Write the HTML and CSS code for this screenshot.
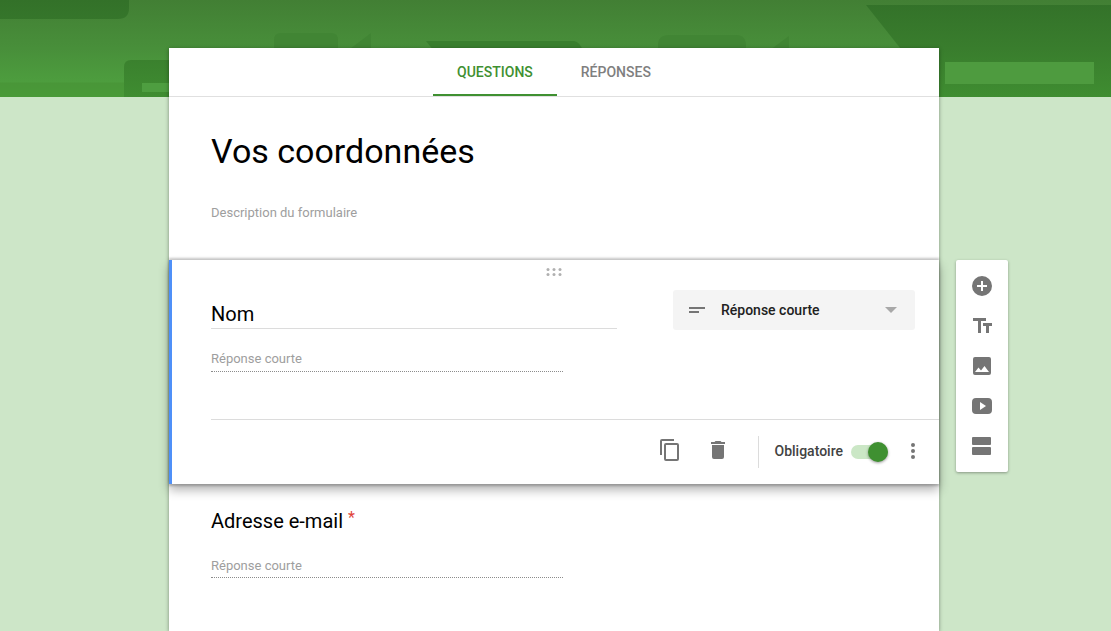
FILE: index.html
```html
<!DOCTYPE html>
<html lang="fr">
<head>
<meta charset="utf-8">
<meta name="viewport" content="width=device-width, initial-scale=1">
<title>Vos coordonnées</title>
<link rel="stylesheet" href="styles.css">
</head>
<body>
<svg class="banner" viewBox="0 0 1111 97" preserveAspectRatio="xMidYMin slice" aria-hidden="true">
  <defs>
    <linearGradient id="base" x1="0" y1="0" x2="0" y2="1">
      <stop offset="0" stop-color="#427f34"/>
      <stop offset="0.5" stop-color="#488f3a"/>
      <stop offset="0.84" stop-color="#4d9d3e"/>
      <stop offset="0.86" stop-color="#499638"/>
      <stop offset="1" stop-color="#499a38"/>
    </linearGradient>
    <linearGradient id="deep" gradientUnits="userSpaceOnUse" x1="0" y1="0" x2="0" y2="97">
      <stop offset="0" stop-color="#337129"/>
      <stop offset="0.5" stop-color="#397d2d"/>
      <stop offset="1" stop-color="#3f8d31"/>
    </linearGradient>
  </defs>
  <rect width="1111" height="97" fill="url(#base)"/>
  <path d="M0 0H129V8Q129 19 118 19H0Z" fill="url(#deep)"/>
  <path d="M124 97V67Q124 60 131 60H200V97Z" fill="url(#deep)"/>
  <rect x="142" y="83" width="60" height="9" fill="#4e9e40"/>
  <path d="M274 60V40Q274 33 281 33H331Q338 33 338 40V60Z" fill="#418534"/>
  <path d="M346 52L371 33V60H346Z" fill="#418534"/>
  <path d="M426 41H574Q580 42 583 51H434Z" fill="#397e2e"/>
  <path d="M658 60V45Q658 35 669 35H736Q746 35 746 46V60Z" fill="#418534"/>
  <path d="M770 50L789 36V60H770Z" fill="#418534"/>
  <path d="M866 5H1111V97H939Z" fill="url(#deep)"/>
  <rect x="945" y="62" width="149" height="22" fill="#4e9b3f"/>
</svg>

<div class="layout">
  <main class="form">
    <nav class="tabs">
      <a class="tab tab-active" href="#questions" aria-current="page">QUESTIONS</a>
      <a class="tab" href="#reponses">RÉPONSES</a>
    </nav>

    <header class="form-head">
      <input class="form-title" type="text" aria-label="Titre du formulaire" value="Vos coordonnées">
      <input class="form-description" type="text" aria-label="Description du formulaire" placeholder="Description du formulaire">
    </header>

    <section class="card" id="questions">
      <svg class="drag" viewBox="0 0 16 8" aria-hidden="true">
        <circle cx="2" cy="1.5" r="1.5"/><circle cx="8" cy="1.5" r="1.5"/><circle cx="14" cy="1.5" r="1.5"/>
        <circle cx="2" cy="6.5" r="1.5"/><circle cx="8" cy="6.5" r="1.5"/><circle cx="14" cy="6.5" r="1.5"/>
      </svg>
      <div class="card-top">
        <input class="question-title" type="text" aria-label="Question" value="Nom">
        <div class="type">
          <svg class="type-icon" viewBox="0 0 16 6" aria-hidden="true"><path d="M0 0H16V2H0ZM0 4H10V6H0Z"/></svg>
          <select class="type-select" aria-label="Type de question">
            <option selected>Réponse courte</option>
            <option>Paragraphe</option>
            <option>Choix multiples</option>
            <option>Cases à cocher</option>
          </select>
          <svg class="type-arrow" viewBox="0 0 12 6" aria-hidden="true"><path d="M0 0H12L6 6Z"/></svg>
        </div>
      </div>
      <input class="answer" type="text" aria-label="Réponse à Nom" placeholder="Réponse courte">
      <footer class="card-actions">
        <button class="icon-button" type="button" aria-label="Dupliquer">
          <svg class="icon" viewBox="0 0 24 24"><path d="M16 1H4a2 2 0 0 0-2 2v14h2V3h12zM19 5H8a2 2 0 0 0-2 2v14a2 2 0 0 0 2 2h11a2 2 0 0 0 2-2V7a2 2 0 0 0-2-2zm0 16H8V7h11z"/></svg>
        </button>
        <button class="icon-button" type="button" aria-label="Supprimer">
          <svg class="icon" viewBox="0 0 24 24"><path d="M6 19a2 2 0 0 0 2 2h8a2 2 0 0 0 2-2V7H6zM19 4h-3.500l-1-1h-5l-1 1H5v2h14z"/></svg>
        </button>
        <label class="required">
          <span class="required-text">Obligatoire</span>
          <input class="switch" type="checkbox" role="switch" checked>
        </label>
        <button class="more" type="button" aria-label="Plus d'options">
          <svg class="icon" viewBox="0 0 24 24"><circle cx="12" cy="6" r="2"/><circle cx="12" cy="12" r="2"/><circle cx="12" cy="18" r="2"/></svg>
        </button>
      </footer>
    </section>

    <section class="question">
      <h2 class="question-label">Adresse e-mail <span class="star">*</span></h2>
      <input class="answer" type="text" aria-label="Réponse à Adresse e-mail" placeholder="Réponse courte">
    </section>
  </main>

  <aside class="toolbar" aria-label="Ajouter un élément">
    <button class="tool" type="button" aria-label="Ajouter une question">
      <svg class="icon" viewBox="0 0 24 24"><path d="M12 2a10 10 0 1 0 0 20 10 10 0 0 0 0-20zm5 11h-4v4h-2v-4H7v-2h4V7h2v4h4z"/></svg>
    </button>
    <button class="tool" type="button" aria-label="Ajouter un titre">
      <svg class="icon" viewBox="0 0 24 24"><path d="M3 4H16V7H11V19H8V7H3ZM13 9H22V12H19V19H16V12H13Z"/></svg>
    </button>
    <button class="tool" type="button" aria-label="Ajouter une image">
      <svg class="icon" viewBox="0 0 24 24"><path d="M21 19V5a2 2 0 0 0-2-2H5a2 2 0 0 0-2 2v14a2 2 0 0 0 2 2h14a2 2 0 0 0 2-2zM8.500 13.500l2.500 3 3.500-4.500 4.500 6H5z"/></svg>
    </button>
    <button class="tool" type="button" aria-label="Ajouter une vidéo">
      <svg class="icon" viewBox="0 0 24 24"><path d="M6 4H18Q22 4 22 8V16Q22 20 18 20H6Q2 20 2 16V8Q2 4 6 4ZM10 8V16L16 12Z"/></svg>
    </button>
    <button class="tool" type="button" aria-label="Ajouter une section">
      <svg class="icon" viewBox="0 0 24 24"><rect x="2" y="3" width="19" height="8" rx="1"/><rect x="2" y="13" width="19" height="8" rx="1"/></svg>
    </button>
  </aside>
</div>
</body>
</html>
```

FILE: styles.css
```css
* {
  box-sizing: border-box;
}

body {
  margin: 0;
  background: #cde6c8;
  color: #000;
  font-family: Roboto, "Liberation Sans", sans-serif;
  font-size: 14px;
}

input,
select,
button {
  margin: 0;
  padding: 0;
  border: 0;
  background: none;
  color: inherit;
  font: inherit;
}

input {
  min-width: 0;
  outline: none;
}

::placeholder {
  color: #9e9e9e;
  opacity: 1;
}

.banner {
  position: absolute;
  top: 0;
  left: 0;
  width: 100%;
  height: 97px;
}

.layout {
  position: relative;
  display: grid;
  grid-template-columns: minmax(0, 1fr) minmax(0, 770px) minmax(69px, 1fr);
  padding: 48px 3px 0 0;
}

.form {
  grid-column: 2;
  min-height: calc(100vh - 48px);
  background: #fff;
  box-shadow: 0 1px 4px rgba(0, 0, 0, 0.4);
}

.tabs {
  display: flex;
  justify-content: center;
  height: 49px;
  border-bottom: 1px solid #e0e0e0;
}

.tab {
  padding: 0 24px;
  border-bottom: 2px solid transparent;
  color: #7f7f7f;
  font-weight: 500;
  line-height: 48px;
  text-decoration: none;
}

.tab-active {
  border-color: #3f9031;
  color: #3f9031;
}

.form-head {
  display: flex;
  flex-direction: column;
  gap: 27px;
  height: 163px;
  padding: 30px 24px 0 42px;
}

.form-title {
  height: 48px;
  font-size: 34px;
}

.form-description {
  height: 20px;
  font-size: 13px;
}

.card {
  position: relative;
  padding-left: 39px;
  border-left: 3px solid #4f90f8;
  background: #fff;
  box-shadow: 0 -2px 2px rgba(0, 0, 0, 0.2), 0 6px 10px rgba(0, 0, 0, 0.3),
    0 2px 2px rgba(0, 0, 0, 0.2);
}

.drag {
  display: block;
  width: calc(100% + 42px);
  height: 30px;
  margin-left: -42px;
  padding: 8px 0 14px;
  fill: #b0b0b0;
}

.card-top {
  display: flex;
  gap: 56px;
  padding-right: 24px;
}

.question-title {
  flex: 1;
  height: 39px;
  padding-top: 10px;
  border-bottom: 1px solid #dcdcdc;
  font-size: 20px;
}

.type {
  display: grid;
  grid-template-columns: 48px 1fr 48px;
  align-items: center;
  justify-items: center;
  width: 242px;
  height: 40px;
  border-radius: 3px;
  background: #f4f4f4;
}

.type-select {
  grid-area: 1 / 1 / 2 / 4;
  width: 100%;
  height: 100%;
  padding: 0 48px;
  appearance: none;
  color: #212121;
  font-weight: 500;
}

.type-icon,
.type-arrow {
  grid-row: 1;
  pointer-events: none;
}

.type-icon {
  grid-column: 1;
  width: 16px;
  height: 6px;
  fill: #757575;
}

.type-arrow {
  grid-column: 3;
  width: 12px;
  height: 6px;
  fill: #a8a8a8;
}

.answer {
  display: block;
  width: 352px;
  max-width: 100%;
  height: 26px;
  border-bottom: 1px dotted #8c8c8c;
  font-size: 13px;
}

.card .answer {
  margin: 16px 0 47px;
}

.card-actions {
  display: flex;
  align-items: center;
  justify-content: flex-end;
  height: 65px;
  padding-right: 14px;
  border-top: 1px solid #dcdcdc;
}

.icon {
  display: block;
  width: 24px;
  height: 24px;
  fill: #757575;
}

.icon-button {
  display: grid;
  place-items: center;
  width: 48px;
  height: 48px;
  padding-bottom: 4px;
}

.required {
  display: flex;
  align-items: center;
  gap: 8px;
  height: 32px;
  margin-left: 16px;
  padding-left: 16px;
  border-left: 1px solid #dcdcdc;
  color: #424242;
  font-weight: 500;
}

.required-text {
  padding-bottom: 2px;
}

.switch {
  appearance: none;
  display: flex;
  align-items: center;
  width: 37px;
  height: 14px;
  border-radius: 7px;
  background: #bdbdbd;
}

.switch::before {
  content: "";
  width: 20px;
  height: 20px;
  border-radius: 50%;
  background: #fafafa;
  box-shadow: 0 1px 3px rgba(0, 0, 0, 0.4);
}

.switch:checked {
  justify-content: flex-end;
  background: #cbe7c6;
}

.switch:checked::before {
  background: #3f9031;
}

.more {
  margin-left: 13px;
  padding-bottom: 2px;
}

.question {
  padding: 23px 24px 32px 42px;
}

.question-label {
  margin: 0;
  font-size: 20px;
  font-weight: 400;
  line-height: 28px;
}

.star {
  color: #e0433a;
  font-size: 16px;
  line-height: 1;
  vertical-align: 5px;
}

.question .answer {
  margin-top: 17px;
  padding-top: 2px;
}

.toolbar {
  align-self: start;
  justify-self: start;
  width: 52px;
  margin: 212px 0 0 17px;
  padding: 6px;
  border-radius: 2px;
  background: #fff;
  box-shadow: 0 1px 3px rgba(0, 0, 0, 0.35);
}

.tool {
  display: grid;
  place-items: center;
  width: 40px;
  height: 40px;
}
```
